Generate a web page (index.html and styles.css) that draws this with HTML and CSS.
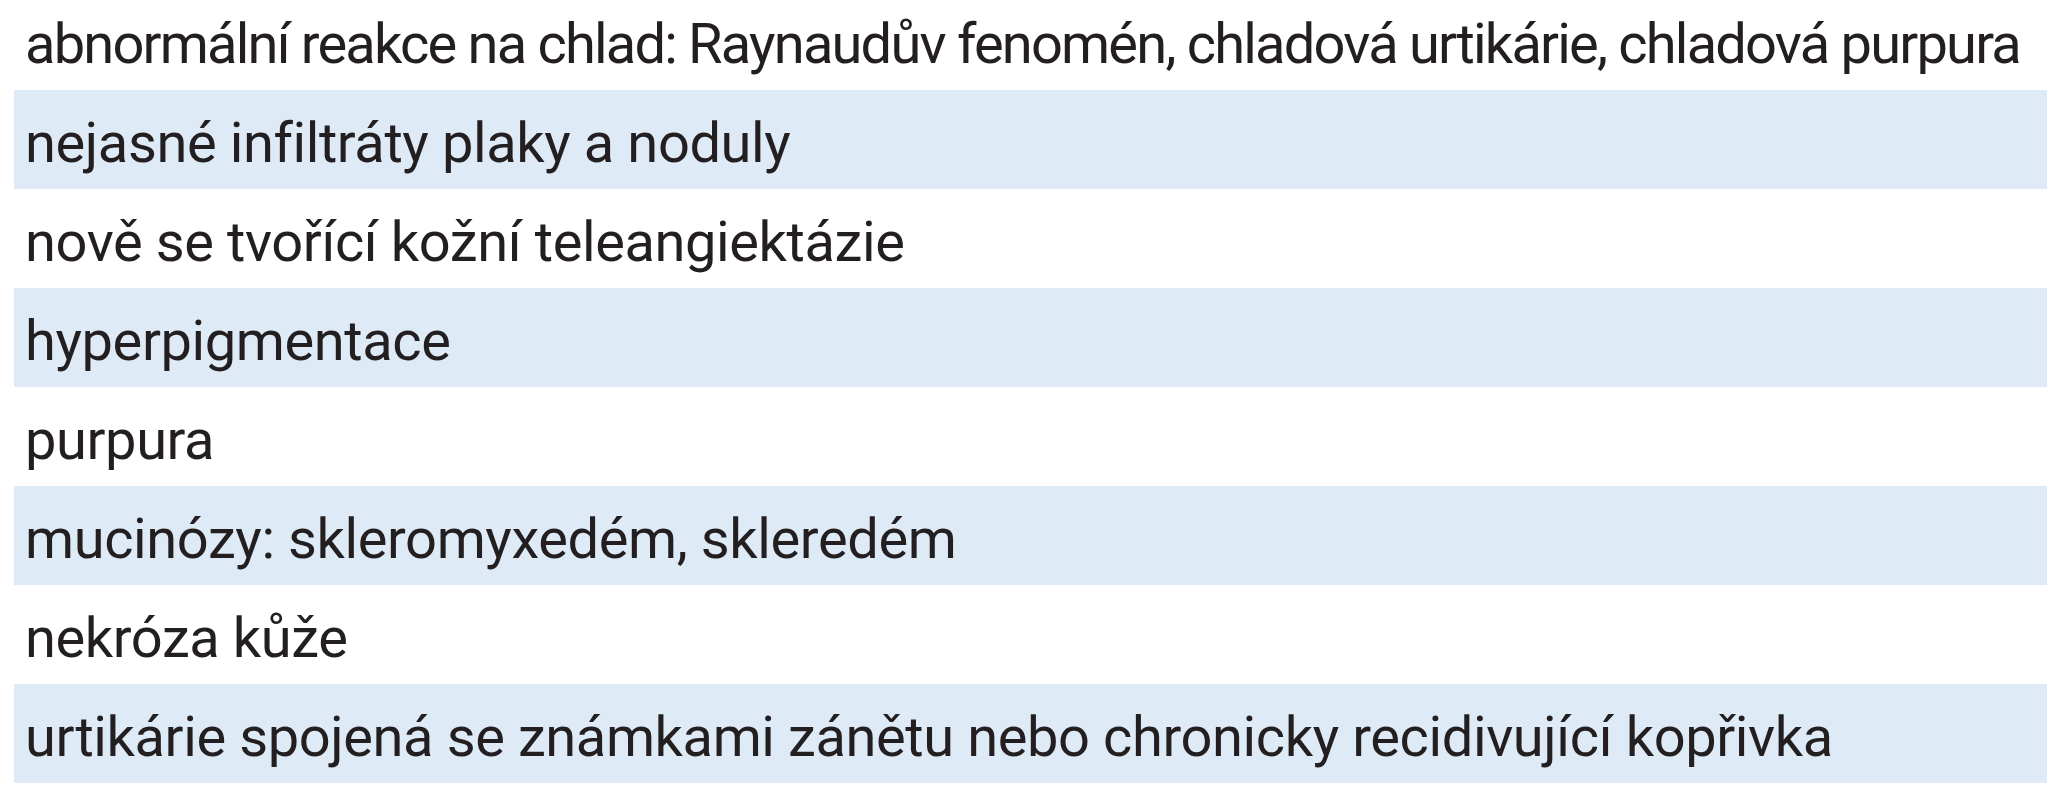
FILE: index.html
```html
<!DOCTYPE html>
<html lang="cs"><head><meta charset="utf-8"><title>Kožní projevy</title><link rel="stylesheet" href="styles.css"></head>
<body>
<div class="list">
  <div class="row tight">abnormální reakce na chlad: Raynaudův fenomén, chladová urtikárie, chladová purpura</div>
  <div class="row alt">nejasné infiltráty plaky a noduly</div>
  <div class="row">nově se tvořící kožní teleangiektázie</div>
  <div class="row alt">hyperpigmentace</div>
  <div class="row">purpura</div>
  <div class="row alt">mucinózy: skleromyxedém, skleredém</div>
  <div class="row">nekróza kůže</div>
  <div class="row alt">urtikárie spojená se známkami zánětu nebo chronicky recidivující kopřivka</div>
</div>
</body></html>
```
FILE: styles.css
```css
html,body{margin:0;padding:0;background:#fff;}
body{width:2059px;height:800px;overflow:hidden;}
.list{display:flex;flex-direction:column;margin:-9px 0 0 14px;width:2033px;}
.row{box-sizing:border-box;height:99px;padding:7px 0 0 11px;font-family:Roboto,"Open Sans",sans-serif;font-size:56px;line-height:92px;letter-spacing:-0.4px;color:#231f20;white-space:nowrap;}
.tight{letter-spacing:-1.8px;}
.alt{background:#deebf7;}
```
